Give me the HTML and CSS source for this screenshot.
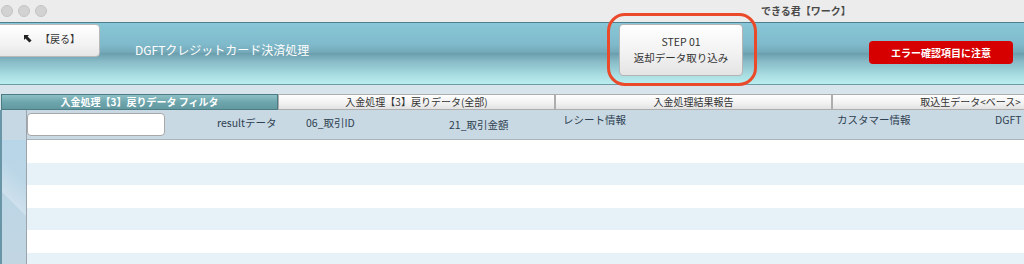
FILE: index.html
```html
<!DOCTYPE html>
<html>
<head>
  <title>できる君【ワーク】</title>
<link rel="stylesheet" href="styles.css">
</head>
<body>
  <div class="titlebar">
    <div class="lights">
      <span class="light"></span>
      <span class="light"></span>
      <span class="light"></span>
    </div>
    <div class="window-title">できる君【ワーク】</div>
  </div>

  <header class="band">
    <button type="button" class="back-btn">
      <svg class="back-icon" width="8" height="8" viewBox="0 0 8 8">
        <path d="M0 0 L5 0 L3.6 1.4 L7.6 5.4 L5.4 7.6 L1.4 3.6 L0 5 Z" fill="#222"/>
      </svg>
      【戻る】
    </button>
    <div class="page-title">DGFTクレジットカード決済処理</div>
    <div class="step-wrap">
      <button type="button" class="step-btn">
        <span>STEP 01</span>
        <span>返却データ取り込み</span>
      </button>
    </div>
    <button type="button" class="alert-btn">エラー確認項目に注意</button>
  </header>

  <nav class="tabs">
    <div class="tab active">入金処理【3】戻りデータ フィルタ</div>
    <div class="tab">入金処理【3】戻りデータ(全部)</div>
    <div class="tab">入金処理結果報告</div>
    <div class="tab">取込生データ&lt;ベース&gt;</div>
  </nav>

  <main class="content">
    <div class="side"></div>
    <div class="list">
      <div class="head-row">
        <div class="cell"><input type="text" class="filter"></div>
        <div class="cell">resultデータ</div>
        <div class="cell">06_取引ID</div>
        <div class="cell low">21_取引金額</div>
        <div class="cell high">レシート情報</div>
        <div class="cell high">カスタマー情報</div>
        <div class="cell high">DGFT</div>
      </div>
      <div class="row"></div>
      <div class="row alt"></div>
      <div class="row"></div>
      <div class="row alt"></div>
      <div class="row"></div>
      <div class="row alt"></div>
    </div>
  </main>
</body>
</html>
```

FILE: styles.css
```css
body {
  margin: 0;
  width: 1024px;
  height: 264px;
  overflow: hidden;
  background-color: #d8e4ec;
  font-family: "Noto Sans CJK JP", "Noto Sans", sans-serif;
  color: #333;
}

button {
  font-family: inherit;
  padding: 0;
  cursor: pointer;
}

/* window title bar */
.titlebar {
  height: 22px;
  background-color: #ececec;
  display: flex;
  align-items: center;
}

.lights {
  display: flex;
  gap: 5px;
  margin-left: 1px;
}

.light {
  width: 10px;
  height: 10px;
  border-radius: 50%;
  background-color: #d2d2d2;
  border: 1px solid #c4c4c4;
}

.window-title {
  margin-left: 714px;
  margin-bottom: 2px;
  font-size: 10px;
  font-weight: bold;
  color: #4a4a4a;
}

/* header band */
.band {
  height: 61px;
  border-top: 1px solid #4d7f8f;
  border-bottom: 1px solid #6c9aa6;
  background: linear-gradient(to bottom, #88c7d7 0%, #7fbacb 35%, #74a9b9 48%, #6b9fae 50%, #86b9c5 62%, #a8dde2 85%, #bbeeee 100%);
  display: flex;
  align-items: flex-start;
}

.back-btn {
  margin-top: 1px;
  margin-left: -4px;
  width: 104px;
  height: 33px;
  border: 1px solid #b9b9b9;
  border-radius: 4px;
  background: linear-gradient(to bottom, #ffffff, #f3f3f3 60%, #e6e6e6);
  font-size: 10px;
  color: #333;
  display: flex;
  align-items: center;
  justify-content: flex-start;
  gap: 8px;
  padding-left: 27px;
  padding-bottom: 4px;
}

.back-icon {
  display: block;
}

.page-title {
  width: 484px;
  margin-left: 35px;
  margin-top: 19px;
  font-size: 12px;
  color: #ffffff;
  line-height: 16px;
}

.step-wrap {
  position: relative;
  margin-top: 1px;
}

/* red callout drawn over the step button */
.step-wrap::before {
  content: "";
  position: absolute;
  left: -12px;
  right: -14px;
  top: -11px;
  bottom: -10px;
  border: 3px solid #ea4a2a;
  border-radius: 18px;
  pointer-events: none;
}

.step-btn {
  width: 124px;
  height: 52px;
  border: 1px solid #b4b4b4;
  border-radius: 4px;
  background: linear-gradient(to bottom, #ffffff, #f2f2f2 55%, #e4e4e4);
  font-size: 10.5px;
  color: #333;
  display: flex;
  flex-direction: column;
  align-items: center;
  justify-content: center;
  line-height: 16px;
}

.alert-btn {
  margin-top: 18px;
  margin-left: 126px;
  width: 144px;
  height: 23px;
  border: none;
  border-radius: 4px;
  background-color: #d70000;
  color: #ffffff;
  font-size: 10px;
  font-weight: bold;
}

/* tabs */
.tabs {
  margin-top: 9px;
  height: 16px;
  display: flex;
  padding-left: 1px;
}

.tab {
  flex: 0 0 277px;
  box-sizing: border-box;
  height: 16px;
  border: 1px solid #adadad;
  background: linear-gradient(to bottom, #ffffff, #f1f1f1 60%, #e2e2e2);
  font-size: 10px;
  line-height: 14px;
  text-align: center;
  white-space: nowrap;
  overflow: hidden;
  color: #333;
}

.tab.active {
  border-color: #4d7d84;
  background: linear-gradient(to bottom, #8dc0c6, #6ea6ad 50%, #6399a1);
  color: #ffffff;
  font-weight: bold;
}

/* list area */
.content {
  display: flex;
  height: 154px;
}

.side {
  width: 24px;
  flex: 0 0 24px;
  border-left: 2px solid #6996a6;
  border-right: 1px solid #9aa4aa;
  background:
    linear-gradient(to bottom, #c6d8e3 0, #c6d8e3 30px, transparent 30px),
    linear-gradient(45deg, rgba(255,255,255,0) 40%, rgba(255,255,255,0.25) 41%, rgba(255,255,255,0) 60%),
    linear-gradient(to bottom, #b5d6ea, #c2d6e2);
}

.list {
  flex: 1;
  min-width: 0;
}

.head-row {
  height: 30px;
  box-sizing: border-box;
  border-bottom: 1px solid #a9b4ba;
  background-color: #c8d9e3;
  display: grid;
  grid-template-columns: 190px 89px 143px 114px 274px 158px 1fr;
  font-size: 10.5px;
  color: #2f4152;
}

.cell {
  padding-top: 5px;
  white-space: nowrap;
}

.cell.low {
  padding-top: 7px;
}

.cell.high {
  padding-top: 2px;
}

.filter {
  margin-top: -2px;
  width: 138px;
  height: 23px;
  box-sizing: border-box;
  border: 1px solid #a8a8a8;
  border-radius: 4px;
  background-color: #ffffff;
  display: block;
}

.row {
  height: 22.5px;
  background-color: #ffffff;
}

.row.alt {
  background-color: #e6f2f7;
}
```
